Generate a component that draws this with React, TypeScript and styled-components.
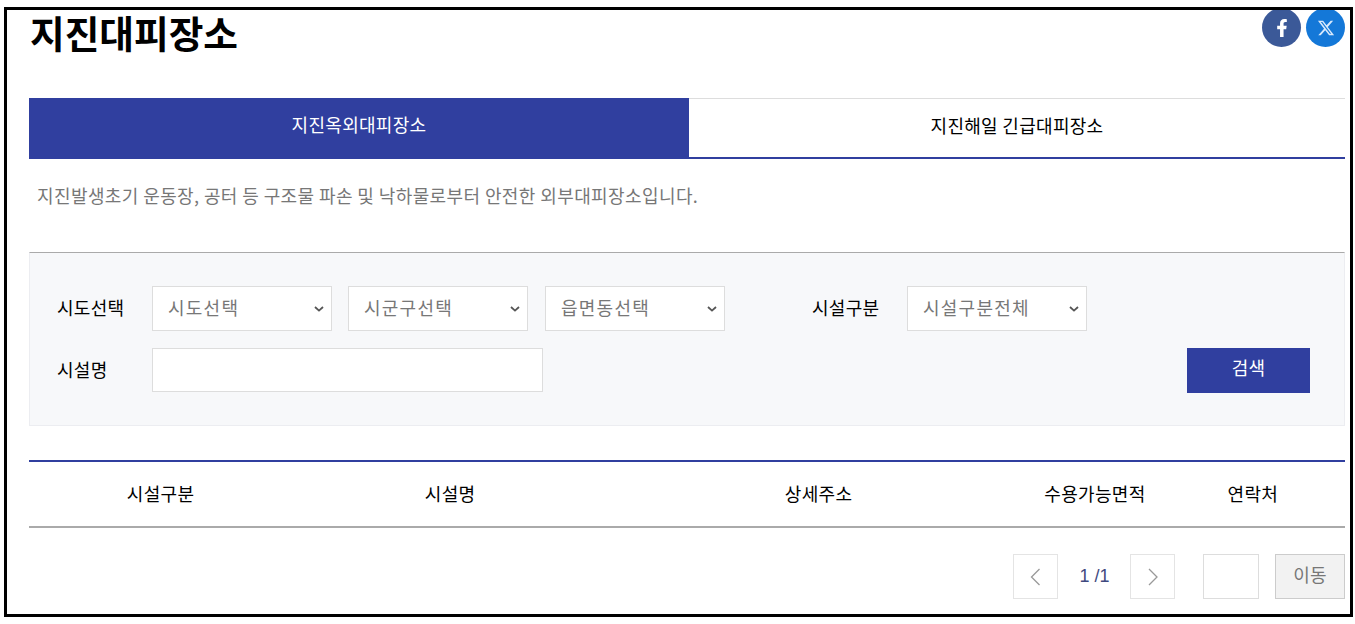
import React from "react";
import styled, { createGlobalStyle } from "styled-components";
import { FaFacebookF } from "react-icons/fa";

const BLUE = "#303f9f";
const ARROW = encodeURIComponent(
  '<svg xmlns="http://www.w3.org/2000/svg" width="10" height="6" viewBox="0 0 10 6"><path d="M1 1l4 3.6L9 1" fill="none" stroke="#555" stroke-width="1.8"/></svg>'
);

const Global = createGlobalStyle`
  html, body { margin: 0; padding: 0; background: #fff; overflow: hidden; }
  * { box-sizing: border-box; }
  body, input, select, button { font-family: "Noto Sans CJK KR", "Noto Sans", sans-serif; }
`;

const Frame = styled.main`
  position: relative;
  width: 1349px;
  height: 610px;
  margin: 7px 0 0 4px;
  border: 3px solid #000;
  padding: 0 5px 0 22px;
`;

const Title = styled.h1`
  margin: 0 0 42px;
  padding-left: 1px;
  height: 46px;
  font-size: 37.7px;
  line-height: 44px;
  font-weight: 700;
  color: #000;
`;

const Social = styled.div`
  position: absolute;
  top: 0;
  right: 5px;
  height: 37px;
  display: flex;
  gap: 5px;
  overflow: hidden;
`;

const SocialLink = styled.a<{ $bg: string }>`
  display: flex;
  align-items: center;
  justify-content: center;
  width: 39px;
  height: 39px;
  margin-top: -2px;
  border-radius: 50%;
  background: ${(p) => p.$bg};
  color: #fff;
`;

const Tabs = styled.div`
  display: flex;
  height: 61px;
  border-top: 1px solid #ddd;
  border-bottom: 2px solid ${BLUE};
`;

const Tab = styled.div<{ $active?: boolean; $width: number }>`
  width: ${(p) => p.$width}px;
  margin: ${(p) => (p.$active ? "-1px 0 -2px" : "0")};
  display: flex;
  align-items: center;
  justify-content: center;
  padding-bottom: ${(p) => (p.$active ? "10px" : "7px")};
  background: ${(p) => (p.$active ? BLUE : "#fff")};
  color: ${(p) => (p.$active ? "#fff" : "#000")};
  font-size: 18px;
  letter-spacing: 0.3px;
`;

const Description = styled.p`
  margin: 0;
  height: 93px;
  padding: 23px 0 0 8px;
  font-size: 18px;
  line-height: 27px;
  letter-spacing: 0.4px;
  color: #777;
`;

const Filter = styled.section`
  height: 174px;
  background: #f7f8fa;
  border: 1px solid #ecedf1;
  border-top: 1px solid #aaa;
  padding: 33px 34px 0 27px;
  display: flex;
  flex-direction: column;
  gap: 17px;
`;

const FilterRow = styled.div`
  display: flex;
  align-items: center;
  height: 45px;
`;

const Label = styled.label<{ $width: number }>`
  width: ${(p) => p.$width}px;
  flex: none;
  padding-bottom: 3px;
  font-size: 18px;
  color: #000;
  letter-spacing: 0.3px;
`;

const Select = styled.select<{ $gapAfter?: number }>`
  appearance: none;
  width: 180px;
  height: 45px;
  flex: none;
  margin-right: ${(p) => p.$gapAfter ?? 0}px;
  padding: 0 0 4px 15px;
  background: #fff url("data:image/svg+xml,${ARROW}") no-repeat right 7px center;
  border: 1px solid #ddd;
  border-radius: 0;
  font-size: 18px;
  letter-spacing: 1.25px;
  color: #777;
`;

const NameInput = styled.input`
  align-self: flex-start;
  width: 391px;
  height: 44px;
  background: #fff;
  border: 1px solid #ddd;
  border-radius: 0;
`;

const SearchButton = styled.button`
  margin-left: auto;
  width: 123px;
  height: 45px;
  padding: 0 0 8px;
  background: ${BLUE};
  border: 0;
  color: #fff;
  font-size: 18px;
  letter-spacing: 0.3px;
`;

const Table = styled.table`
  width: 100%;
  margin-top: 34px;
  border-collapse: collapse;
  table-layout: fixed;
  border-top: 2px solid ${BLUE};
  border-bottom: 2px solid #aaa;
`;

const HeadCell = styled.th<{ $width: number }>`
  width: ${(p) => p.$width}%;
  height: 66px;
  padding: 0 0 3px;
  font-size: 18px;
  font-weight: 400;
  letter-spacing: 0.3px;
  color: #000;
  text-align: center;
`;

const Pager = styled.nav`
  margin-top: 26px;
  display: flex;
  justify-content: flex-end;
  align-items: center;
`;

const PageArrow = styled.a`
  width: 45px;
  height: 45px;
  display: flex;
  align-items: center;
  justify-content: center;
  border: 1px solid #e4e4e4;
  color: #999;
`;

const PageCount = styled.span`
  width: 72px;
  padding-left: 1px;
  text-align: center;
  font-family: "Liberation Sans", Arial, sans-serif;
  font-size: 18px;
  color: #3f4a7f;
`;

const PageInput = styled.input`
  width: 56px;
  height: 45px;
  margin-left: 28px;
  background: #fff;
  border: 1px solid #ddd;
  border-radius: 0;
`;

const MoveButton = styled.button`
  width: 70px;
  height: 45px;
  margin-left: 16px;
  padding: 0 0 6px;
  background: #f2f2f2;
  border: 1px solid #ccc;
  color: #777;
  font-size: 18px;
  letter-spacing: 0.3px;
`;

const Chevron = ({ left }: { left?: boolean }) => (
  <svg width="12" height="20" viewBox="0 0 12 20" fill="none" stroke="currentColor" strokeWidth="1.3">
    <path d={left ? "M9.5 2 1.5 10l8 8" : "M2 2l8 8-8 8"} />
  </svg>
);

const XLogo = () => (
  <svg width="18" height="18" viewBox="0 0 24 24" fill="#d8e9fc">
    <path d="M18.244 2.25h3.308l-7.227 8.26 8.502 11.24H16.17l-5.214-6.817L4.99 21.75H1.68l7.73-8.835L1.254 2.25H8.08l4.713 6.231zm-1.161 17.52h1.833L7.084 4.126H5.117z" />
  </svg>
);

const columns: [string, number][] = [
  ["시설구분", 20],
  ["시설명", 24],
  ["상세주소", 32],
  ["수용가능면적", 10],
  ["연락처", 14],
];

export default function App() {
  return (
    <>
      <Global />
      <Frame>
        <Title>지진대피장소</Title>
        <Social>
          <SocialLink $bg="#3b5998" href="#" aria-label="facebook">
            <FaFacebookF size={18} />
          </SocialLink>
          <SocialLink $bg="#1478d8" href="#" aria-label="X">
            <XLogo />
          </SocialLink>
        </Social>

        <Tabs>
          <Tab $active $width={660}>지진옥외대피장소</Tab>
          <Tab $width={656}>지진해일 긴급대피장소</Tab>
        </Tabs>

        <Description>지진발생초기 운동장, 공터 등 구조물 파손 및 낙하물로부터 안전한 외부대피장소입니다.</Description>

        <Filter>
          <FilterRow>
            <Label $width={95}>시도선택</Label>
            <Select $gapAfter={16}><option>시도선택</option></Select>
            <Select $gapAfter={17}><option>시군구선택</option></Select>
            <Select $gapAfter={87}><option>읍면동선택</option></Select>
            <Label $width={95}>시설구분</Label>
            <Select><option>시설구분전체</option></Select>
          </FilterRow>
          <FilterRow>
            <Label $width={95}>시설명</Label>
            <NameInput />
            <SearchButton>검색</SearchButton>
          </FilterRow>
        </Filter>

        <Table>
          <thead>
            <tr>
              {columns.map(([name, width]) => (
                <HeadCell key={name} $width={width}>{name}</HeadCell>
              ))}
            </tr>
          </thead>
        </Table>

        <Pager>
          <PageArrow><Chevron left /></PageArrow>
          <PageCount>1 /1</PageCount>
          <PageArrow><Chevron /></PageArrow>
          <PageInput />
          <MoveButton>이동</MoveButton>
        </Pager>
      </Frame>
    </>
  );
}
